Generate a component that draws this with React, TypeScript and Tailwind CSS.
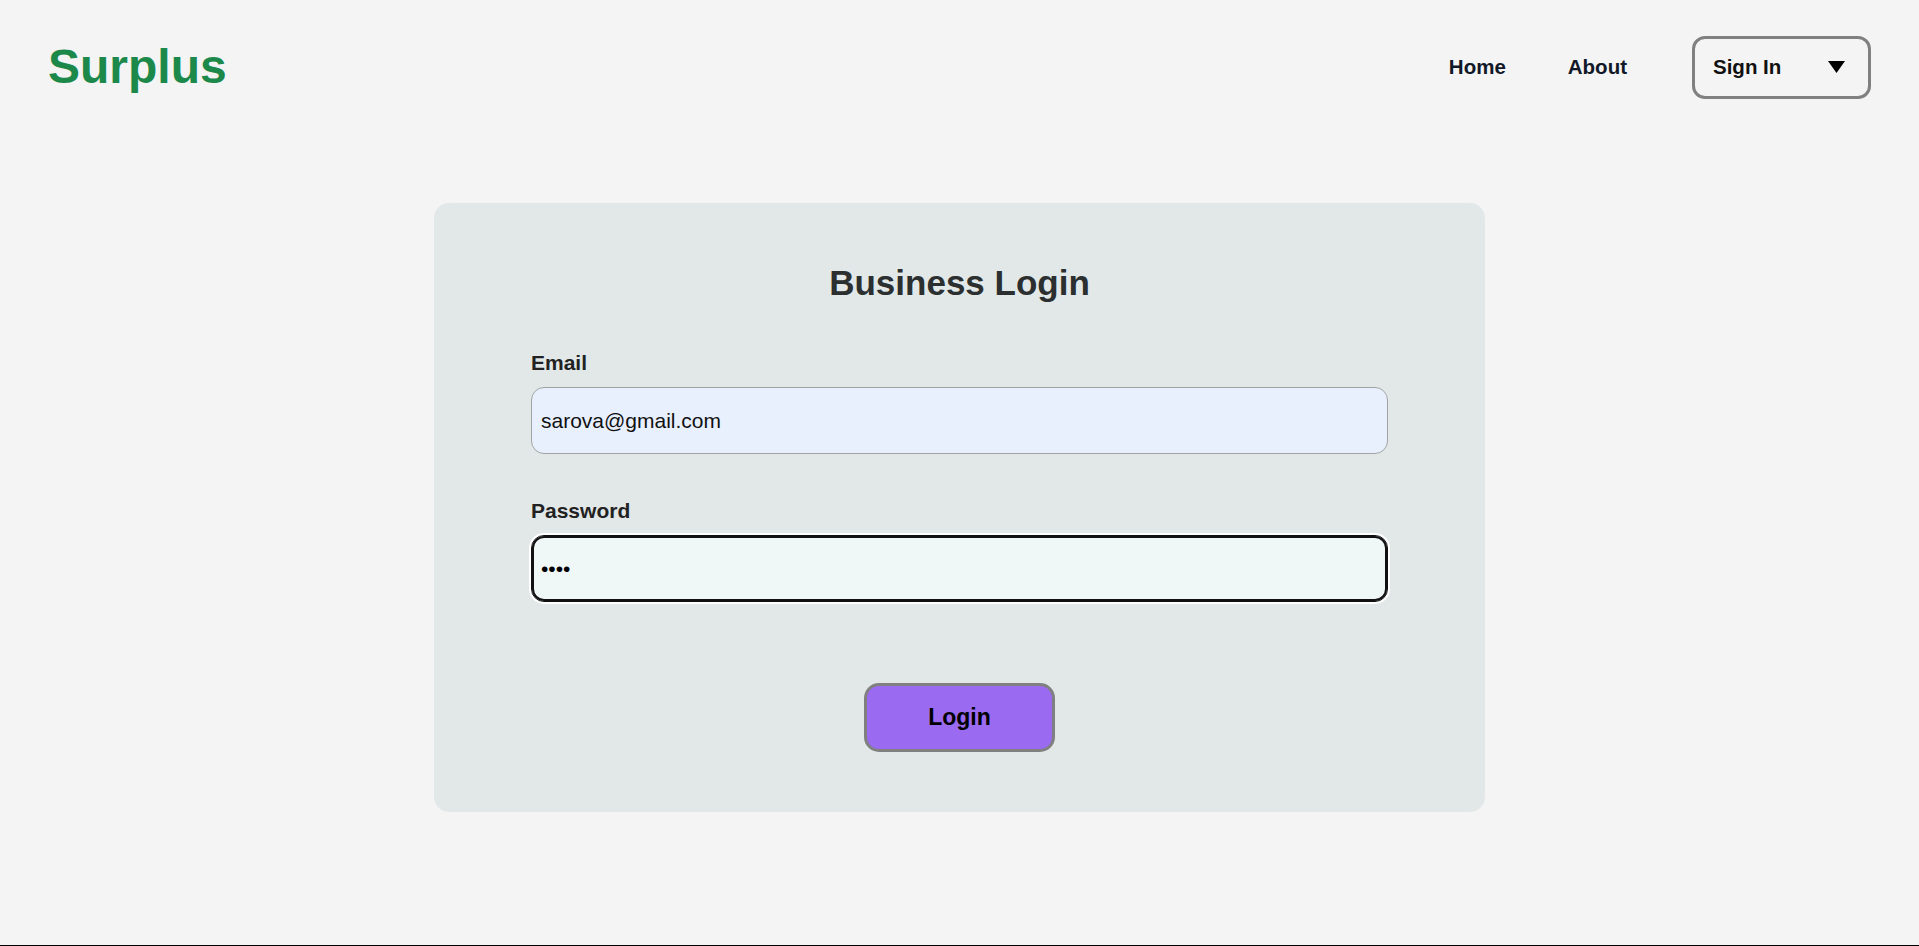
const font = { fontFamily: '"Liberation Sans", Arial, sans-serif' };

const Header = () => {
  return (
    <header className="flex h-[133px] items-center justify-between px-12">
      {/* LOGO */}
      <div className="text-[48px] font-bold leading-none text-[#1c894b]">Surplus</div>
      {/* NAV */}
      <nav className="flex items-center pt-px">
        <a className="text-[20.5px] font-bold leading-none text-[#111827]">Home</a>
        <a className="ml-[62px] text-[20.5px] font-bold leading-none text-[#111827]">About</a>
        <button className="ml-[65px] flex h-[63px] w-[179px] items-center justify-between rounded-[13px] border-[3px] border-[#808080] pl-[18px] pr-[23px]">
          <span className="text-[20.5px] font-bold leading-none text-[#111]">Sign In</span>
          <svg width="17" height="12" viewBox="0 0 17 12">
            <polygon points="0,0 17,0 8.5,12" fill="#000" />
          </svg>
        </button>
      </nav>
    </header>
  );
};

const Field = ({
  label,
  type,
  value,
  focused,
}: {
  label: string;
  type: string;
  value: string;
  focused?: boolean;
}) => {
  return (
    <div className="flex flex-col gap-[14px]">
      <label className="text-[21px] font-bold leading-none text-[#222]">{label}</label>
      <input
        type={type}
        value={value}
        readOnly
        style={font}
        className={
          focused
            ? "h-[67px] w-full rounded-[13px] border border-[#111] bg-[#eff8f7] pl-[9px] text-[21px] text-black outline-none shadow-[inset_0_0_0_2px_#111,0_0_0_2px_#fff]"
            : "h-[67px] w-full rounded-[13px] border border-[#a3a3a3] bg-[#e8f0fe] pl-[9px] text-[21px] text-[#111] outline-none"
        }
      />
    </div>
  );
};

export default function App() {
  return (
    <div style={font} className="flex h-[946px] flex-col bg-[#f4f4f4]">
      <Header />
      <main className="flex flex-1 justify-center pt-[70px]">
        <div className="flex h-[609px] w-[1051px] flex-col rounded-[15px] bg-[#e2e8e8] px-[97px] pt-[62px]">
          {/* TITLE */}
          <h2 className="text-center text-[35px] font-bold leading-none text-[#2c2f2f]">Business Login</h2>
          {/* FORM */}
          <div className="mt-[52px] flex flex-col gap-[46px]">
            <Field label="Email" type="email" value="sarova@gmail.com" />
            <Field label="Password" type="password" value="abcd" focused />
          </div>
          <div className="mt-[81px] flex justify-center">
            <button className="h-[69px] w-[191px] rounded-[15px] border-[3px] border-[#808080] bg-[#9a6bf1] text-[23px] font-bold text-black">
              Login
            </button>
          </div>
        </div>
      </main>
      <div className="h-px bg-black" />
    </div>
  );
}
